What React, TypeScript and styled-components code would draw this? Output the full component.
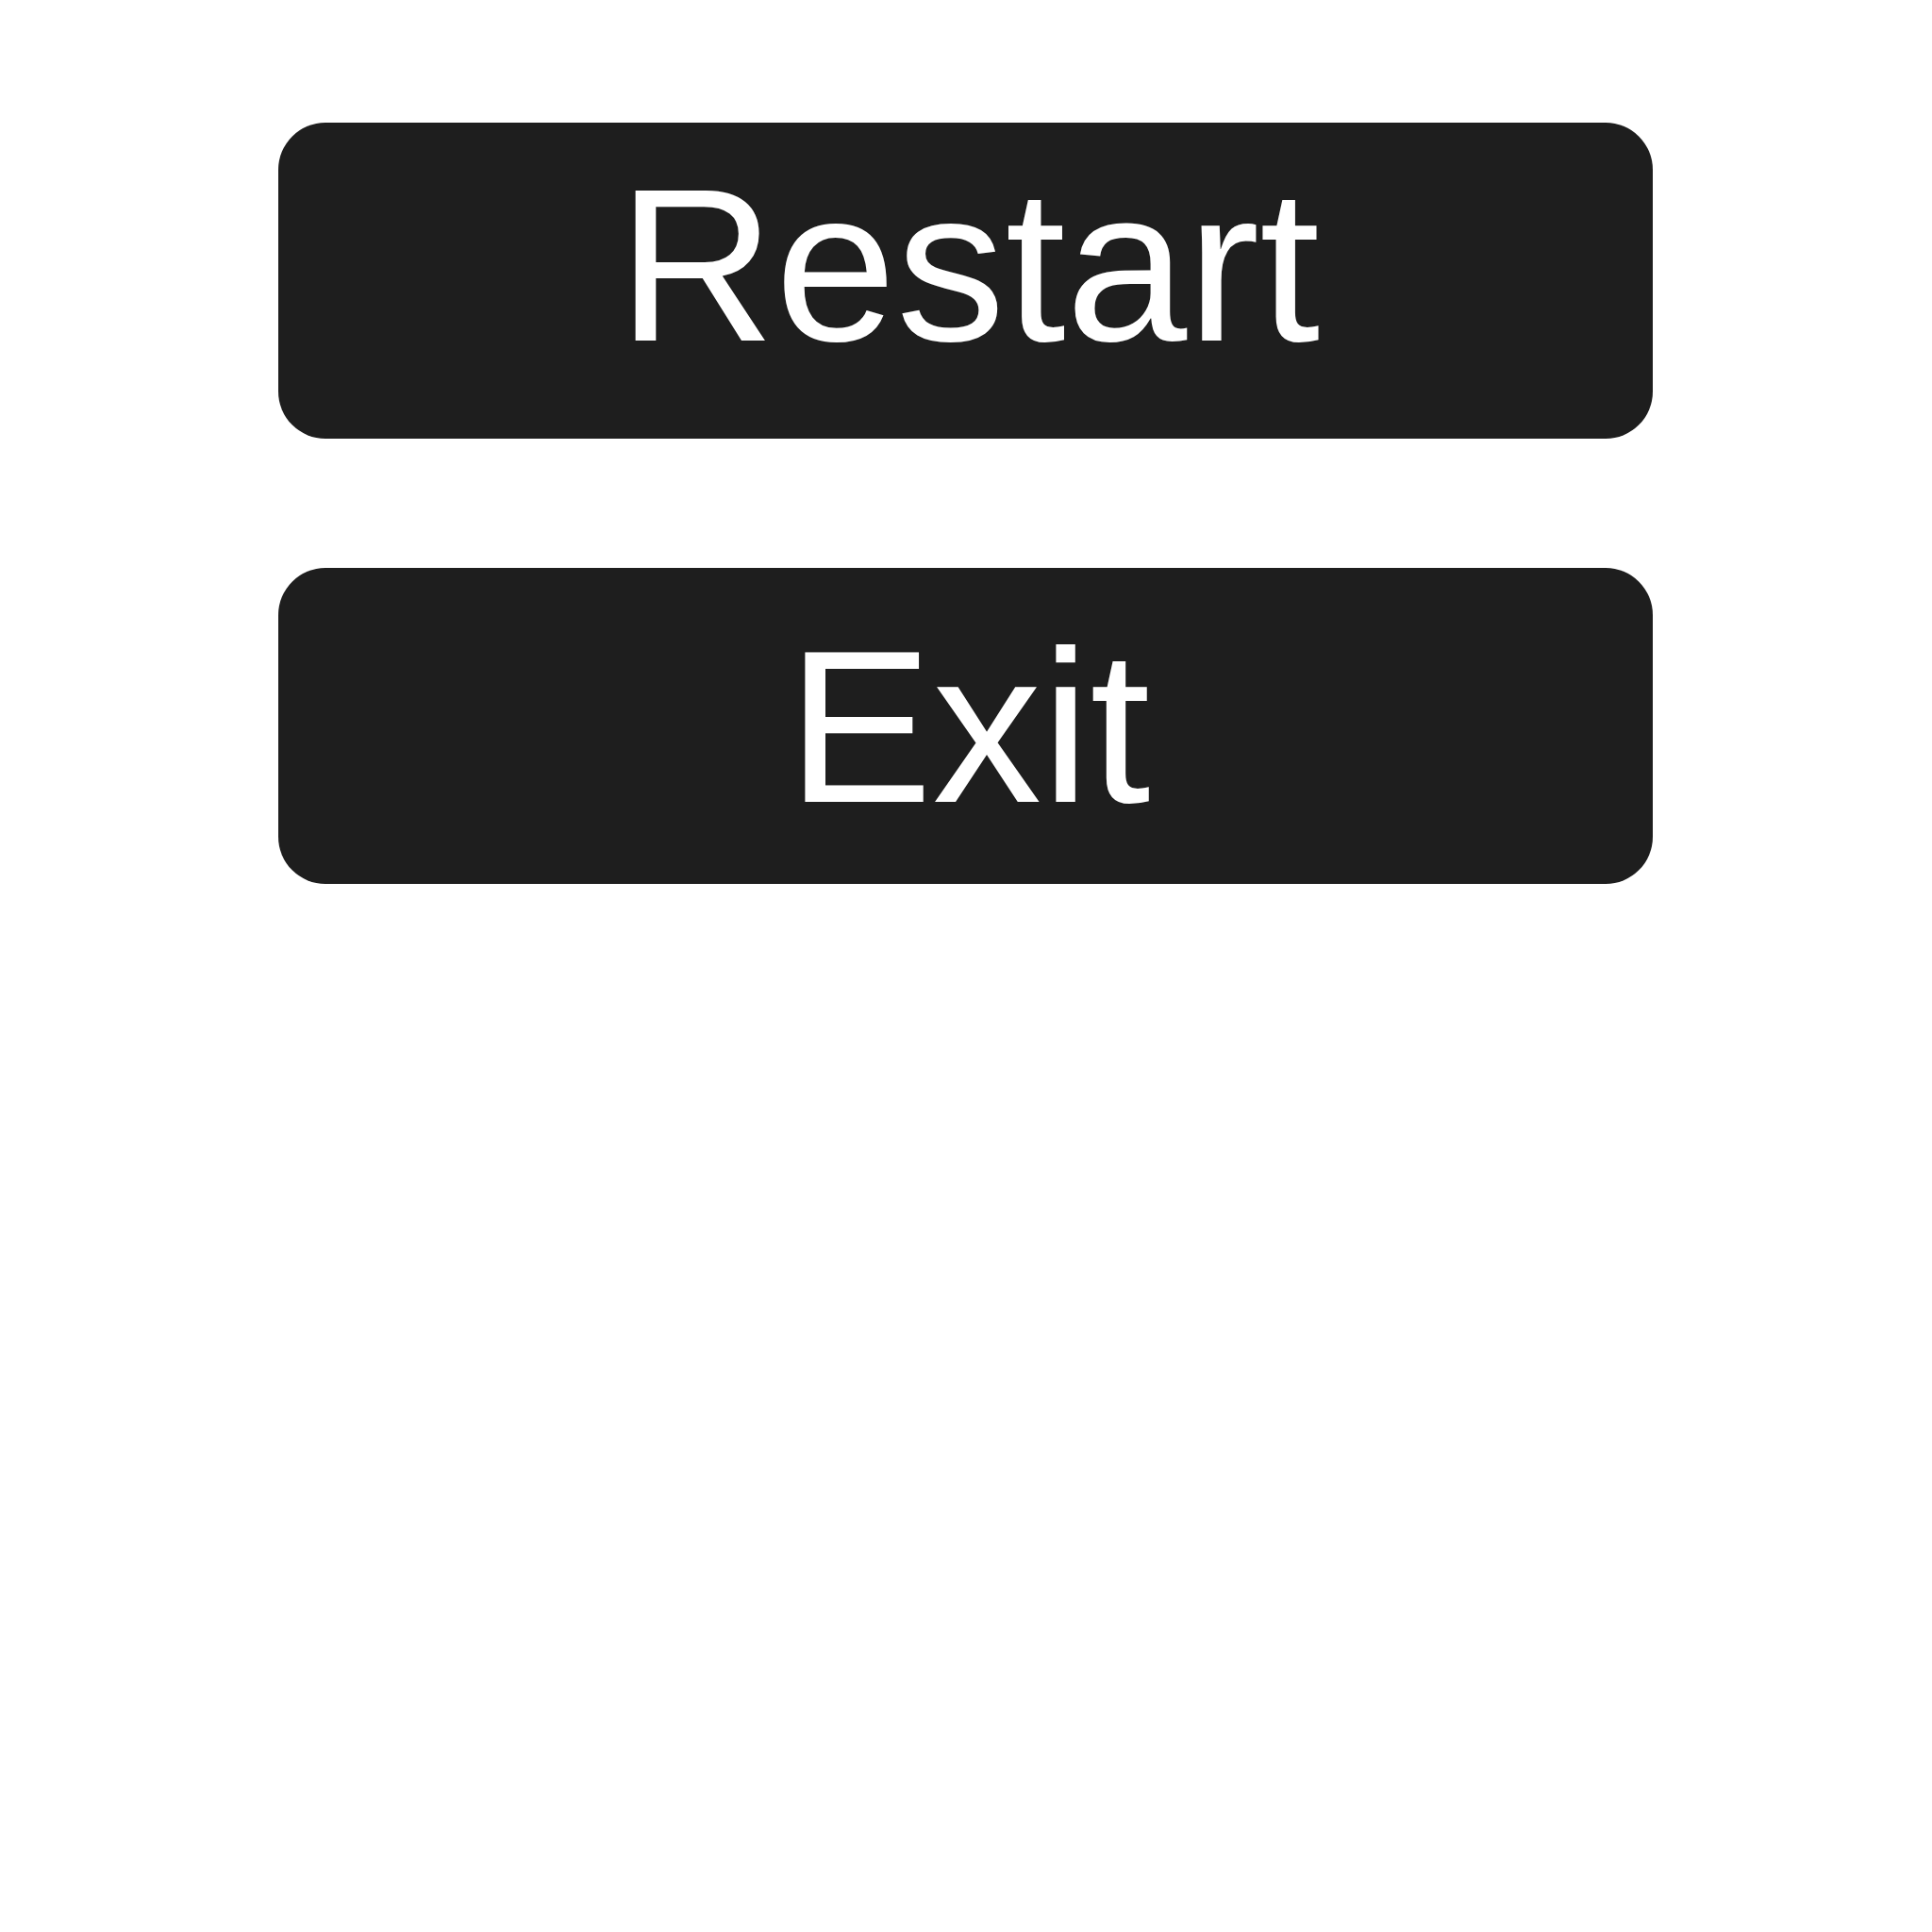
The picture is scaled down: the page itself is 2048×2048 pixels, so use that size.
import React from "react";
import styled, { createGlobalStyle } from "styled-components";

const GlobalStyle = createGlobalStyle`
  html, body {
    margin: 0;
    padding: 0;
    background: #ffffff;
  }
  body {
    font-family: "Liberation Sans", Arial, sans-serif;
  }
`;

const Page = styled.div`
  display: flex;
  flex-direction: column;
  gap: 137px;
  padding: 130px 0 0 295px;
  width: 1457px;
`;

const MenuButton = styled.button<{ $textTop: number }>`
  all: unset;
  box-sizing: border-box;
  display: flex;
  justify-content: center;
  align-items: flex-start;
  width: 1457px;
  height: 335px;
  padding: ${(p) => p.$textTop}px 0 0 7px;
  background: #1e1e1e;
  border-radius: 50px;
  cursor: pointer;
`;

const Label = styled.span`
  display: block;
  color: #ffffff;
  font-family: "Liberation Sans", Arial, sans-serif;
  font-size: 231px;
  line-height: 231px;
  font-weight: 400;
`;

export default function App() {
  return (
    <>
      <GlobalStyle />
      <Page>
        <MenuButton $textTop={36}>
          <Label>Restart</Label>
        </MenuButton>
        <MenuButton $textTop={53}>
          <Label>Exit</Label>
        </MenuButton>
      </Page>
    </>
  );
}
